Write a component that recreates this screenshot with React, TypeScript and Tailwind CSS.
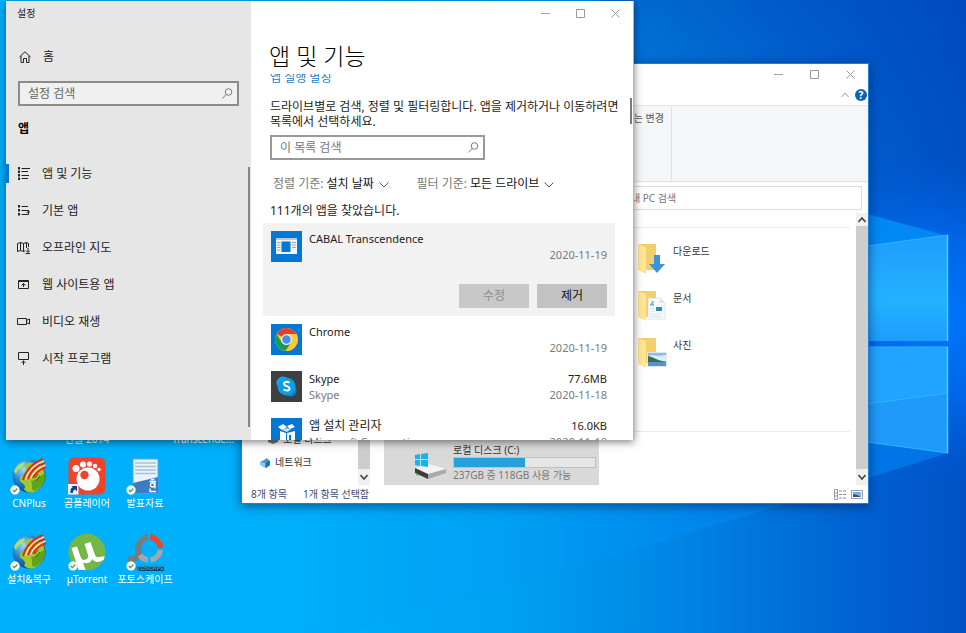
import type { ReactNode } from 'react';

const sans = "font-['Noto_Sans','Noto_Sans_CJK_KR',sans-serif]";

const menuItems = [
  { label: '앱 및 기능', icon: 'apps', active: true },
  { label: '기본 앱', icon: 'defaults' },
  { label: '오프라인 지도', icon: 'maps' },
  { label: '웹 사이트용 앱', icon: 'web' },
  { label: '비디오 재생', icon: 'video' },
  { label: '시작 프로그램', icon: 'startup' },
];

const shortcuts = [
  { lines: ['한컴오피스', '한글 2014'] },
  { lines: [] },
  { lines: ['CABAL', 'Transcende...'] },
  { lines: ['CNPlus'], icon: 'globe' },
  { lines: ['곰플레이어'], icon: 'gom' },
  { lines: ['발표자료'], icon: 'hwp' },
  { lines: [] },
  { lines: ['설치&복구'], icon: 'globe' },
  { lines: ['μTorrent'], icon: 'utorrent' },
  { lines: ['포토스케이프'], icon: 'photoscape' },
];

const folders = [
  { label: '다운로드', kind: 'download' },
  { label: '문서', kind: 'document' },
  { label: '사진', kind: 'picture' },
];

const Wallpaper = () => (
  <svg className="absolute inset-0 h-full w-full" viewBox="0 0 966 633" preserveAspectRatio="none" aria-hidden="true">
    <defs>
      <linearGradient id="sky" x1="0" y1="0" x2="1" y2="0">
        <stop offset="0" stopColor="#00b0fb" />
        <stop offset="0.3" stopColor="#00b0fa" />
        <stop offset="0.52" stopColor="#00a2f2" />
        <stop offset="0.67" stopColor="#008ae8" />
        <stop offset="0.79" stopColor="#0074dc" />
        <stop offset="0.9" stopColor="#0060d2" />
        <stop offset="1" stopColor="#0052c6" />
      </linearGradient>
      <linearGradient id="dusk" x1="0" y1="0" x2="0" y2="1">
        <stop offset="0" stopColor="#003fb4" stopOpacity="0.45" />
        <stop offset="1" stopColor="#003fb4" stopOpacity="0" />
      </linearGradient>
      <linearGradient id="beam" x1="0" y1="0" x2="1" y2="0">
        <stop offset="0" stopColor="#00a8ff" stopOpacity="0" />
        <stop offset="0.5" stopColor="#0098ff" stopOpacity="0.2" />
        <stop offset="1" stopColor="#0090ff" stopOpacity="0.5" />
      </linearGradient>
      <radialGradient id="glow" gradientUnits="userSpaceOnUse" cx="935" cy="320" r="160">
        <stop offset="0" stopColor="#0078ff" />
        <stop offset="0.5" stopColor="#006cf2" stopOpacity="0.75" />
        <stop offset="1" stopColor="#0060e0" stopOpacity="0" />
      </radialGradient>
      <linearGradient id="pane" x1="0" y1="0" x2="0" y2="1">
        <stop offset="0" stopColor="#1f9dfc" />
        <stop offset="0.6" stopColor="#22b2ff" />
        <stop offset="1" stopColor="#1e9dfc" />
      </linearGradient>
    </defs>
    <rect width="966" height="633" fill="url(#sky)" />
    <rect x="600" width="366" height="240" fill="url(#dusk)" />
    <rect x="770" y="150" width="196" height="340" fill="url(#glow)" />
    <path d="M860 212 948 236 860 248Z" fill="#0092fa" opacity="0.8" />
    <path d="M100 440H860L948 453 766 510 600 560 345 633H100Z" fill="url(#beam)" />
    <path d="M860 247 948 235V341H860Z" fill="url(#pane)" />
    <path d="M860 347H948V453L860 441Z" fill="#1f99fa" />
    <path d="M860 347H948V393L860 405Z" fill="#21a4ff" />
    <path d="M860 247 948 235M860 347H948M860 441 948 453M860 405 948 393" fill="none" stroke="#2cb6fd" />
    <path d="M947.500 235V341M947.500 347V453" stroke="#40d8ff" strokeWidth="1.500" />
  </svg>
);

const SyncBadge = () => (
  <g>
    <circle cx="5" cy="33" r="4.5" fill="#fff" stroke="#cfdcd0" strokeWidth=".5" />
    <path d="m2.8 33 1.6 1.7 3-3.2" fill="none" stroke="#3f9b45" strokeWidth="1.2" />
  </g>
);

const ShortcutIcon = ({ name }: { name?: string }) => {
  if (name === 'globe') {
    return (
      <svg width="38" height="38" viewBox="0 0 38 38" aria-hidden="true">
        <defs>
          <radialGradient id="earth" cx="0.35" cy="0.3" r="0.75">
            <stop offset="0" stopColor="#9adcf8" />
            <stop offset="0.5" stopColor="#2484cc" />
            <stop offset="1" stopColor="#0a3f80" />
          </radialGradient>
        </defs>
        <circle cx="19" cy="19" r="16.5" fill="url(#earth)" />
        <path d="M16 7c6-3 14 0 17 5 4 8 1 18-7 22-5 3-11 1-12-2 3-3-1-5-4-8-1-4 3-6 6-8 3-2-2-5 0-9Z" fill="#9dcb2c" />
        <path d="M21 24c5 0 9-5 14-8 1 9-4 16-12 18-2-3 0-6-2-10Z" fill="#5fa31c" />
        <path d="M4 14c2-5 6-8 11-9l-2 5-5 3-2 4Z" fill="#b6dc68" />
        <path d="M13 23C16 13 23 6 33 2M18 22C21 14 27 8 35 6M23 21c3-6 7-9 13-11" fill="none" stroke="#d9301f" strokeWidth="2.2" />
        <path d="M15.500 22.500C18 14 25 7 34 4M20.500 21.500c3-7 8-11 15-13.500" fill="none" stroke="#ffe39a" strokeWidth="1.5" />
        <path d="m25 21 3-4M26 24l4-5" stroke="#3d6b14" />
        <SyncBadge />
      </svg>
    );
  }
  if (name === 'gom') {
    return (
      <svg width="38" height="38" viewBox="0 0 38 38" aria-hidden="true">
        <rect x=".5" y=".5" width="37" height="37" rx="6" fill="#f0432c" />
        <circle cx="20" cy="22" r="11.5" fill="#fff" />
        <circle cx="16.500" cy="18" r="4.2" fill="#f0432c" />
        <circle cx="8" cy="11.500" r="3.5" fill="#fff" />
        <circle cx="15" cy="7.500" r="3" fill="#fff" />
        <circle cx="21.500" cy="7" r="2.600" fill="#fff" />
        <circle cx="27" cy="9" r="2.200" fill="#fff" />
        <circle cx="31" cy="12.500" r="1.800" fill="#fff" />
        <rect x="0" y="27" width="10.500" height="10.500" fill="#eef3fa" />
        <path d="M2.500 36c0-4 .5-5.500 2.500-5.500L3.500 29H9v5.500L7.300 32.500C5.500 33 5 34 4.800 36Z" fill="#173e84" />
      </svg>
    );
  }
  if (name === 'hwp') {
    return (
      <svg width="38" height="38" viewBox="0 0 38 38" aria-hidden="true">
        <rect x="7" y="2" width="25" height="34" fill="#e9f3fb" stroke="#5aa5dc" />
        <path d="M9 6h21M9 9.500h21M9 13h21M9 16.500h21" stroke="#a3c2dc" strokeWidth="1.500" />
        <path d="M7 26 32 20V36H7Z" fill="#3b7dc0" />
        <path d="M25 22.500h3.500M23.500 24.500h6.500M24 31.500v3h6M29 24.500v7" fill="none" stroke="#fff" strokeWidth="1.300" />
        <circle cx="26.500" cy="28" r="2" fill="none" stroke="#fff" strokeWidth="1.300" />
        <SyncBadge />
      </svg>
    );
  }
  if (name === 'utorrent') {
    return (
      <svg width="38" height="38" viewBox="0 0 38 38" aria-hidden="true">
        <circle cx="19" cy="19" r="18.500" fill="#74b748" />
        <path d="M3.500 15 9 13.500 13 25c1.500 3.500 8 2 7-3L16.500 11l6-2L27 22c1 3 4.500 2.500 9.500 1l-.5 3.500c-4 3-9.500 3.500-11.500-.5-2 4-6 5-9.500 3.500L17.500 37h-7Z" fill="#fff" />
        <SyncBadge />
      </svg>
    );
  }
  if (name === 'photoscape') {
    return (
      <svg width="38" height="38" viewBox="0 0 38 38" aria-hidden="true">
        <path d="M22 4A12 12 0 0 0 12.500 18C13 24 9 27 2 26" fill="none" stroke="#737d84" strokeWidth="6" />
        <path d="M24 4a12 12 0 0 1 10.500 11" fill="none" stroke="#f3461f" strokeWidth="5.500" />
        <path d="M34.500 17A12 12 0 0 1 24.500 27M22 27a11 11 0 0 1-8-5" fill="none" stroke="#a0a8ae" strokeWidth="5.500" />
        <text x="11" y="37" fontSize="6" fontWeight="700" fill="#5c93b4">TOSCAPE</text>
        <SyncBadge />
      </svg>
    );
  }
  return <span className="h-[38px]" />;
};

const Caption = ({ className }: { className: string }) => (
  <div className="flex justify-end">
    <button type="button" aria-label="최소화" className={className}>
      <svg width="9" height="9" viewBox="0 0 9 9" stroke="#a3a3a3"><path d="M0 4.500h9" /></svg>
    </button>
    <button type="button" aria-label="최대화" className={className}>
      <svg width="9" height="9" viewBox="0 0 9 9" fill="none" stroke="#999"><path d="M.5.5h8v8h-8z" /></svg>
    </button>
    <button type="button" aria-label="닫기" className={className}>
      <svg width="9" height="9" viewBox="0 0 9 9" stroke="#999"><path d="m.5.5 8 8M8.500.5l-8 8" /></svg>
    </button>
  </div>
);

const Chevron = ({ up = false, bold = false }: { up?: boolean; bold?: boolean }) => (
  <svg width="8" height="6" viewBox="0 0 8 6" fill="none" stroke={bold ? '#444' : '#999'} strokeWidth={bold ? 1.6 : 1} aria-hidden="true">
    <path d={up ? 'M.5 5 4 1l3.500 4' : 'M.5 1 4 5l3.500-4'} />
  </svg>
);

const FolderIcon = ({ kind }: { kind: string }) => (
  <svg width="30" height="33" viewBox="0 0 30 33" aria-hidden="true">
    <path d="M1 2h18v26H8L1 27Z" fill="#f3cf6b" />
    <path d="M1 2 9 5V32L1 28Z" fill="#ffe596" />
    {kind === 'download' && <path d="M17 13h6v9h5L20 31l-8-9h5Z" fill="#3a94dd" />}
    {kind === 'document' && (
      <g>
        <path d="M11 9h12l5 5v16H11Z" fill="#f7fafc" stroke="#cfd8de" strokeWidth=".7" />
        <path d="M23 9v5h5" fill="#dbe5ec" />
        <path d="m13 17 3-5v5M13.500 15.500h3" fill="none" stroke="#5ba6d2" />
        <rect x="19" y="18" width="6" height="4" fill="#3c88a8" />
        <path d="M13 19.500h5M13 22h5M13 25h12M13 27.500h12" stroke="#d5dfe5" strokeWidth=".8" />
      </g>
    )}
    {kind === 'picture' && (
      <g>
        <rect x="10.500" y="16.500" width="19" height="14" fill="#8cbcec" stroke="#dfe7ec" />
        <path d="M11 20c5-2 8 1 18-1v6H11Z" fill="#d8ecf9" />
        <path d="M11 20c5 1 9 4 14 5l4 1H11Z" fill="#3d6a58" />
        <path d="M11 26h18v4H11Z" fill="#5b94c0" />
      </g>
    )}
  </svg>
);

const Explorer = () => (
  <section className="absolute left-[241px] top-[63px] flex h-[441px] w-[628px] flex-col border border-[#1683d8] bg-white text-[10px] text-[#333] shadow-[0_2px_10px_rgba(0,20,60,0.55)]">
    <Caption className="flex h-[21px] w-9 items-center justify-center" />
    <div className="flex h-[21px] items-center justify-end gap-[6px] border-b border-[#e3e4e6] pr-px">
      <button type="button" aria-label="리본 최소화"><Chevron up /></button>
      <button type="button" aria-label="도움말" className="flex size-3 items-center justify-center rounded-full bg-[#0f62b4] text-[10px] font-bold text-white">?</button>
    </div>
    <div className="flex h-[76px] border-b border-[#dedfe0] bg-[#f5f6f7]">
      <div className="my-px flex w-[430px] justify-end border-r border-[#dedfe0] pr-[7px] pt-1">
        <span className="text-[#555]">또는 변경</span>
      </div>
    </div>
    <div className="flex h-[31px] items-center justify-end pr-[6px]">
      <input
        type="search"
        aria-label="내 PC 검색"
        placeholder="내 PC 검색"
        className="h-6 w-[240px] border border-[#dcdcdc] bg-white pl-2 text-[10px] outline-none placeholder:text-[#777]"
      />
    </div>
    <div className="flex min-h-0 flex-1">
      <nav className="flex w-[116px] flex-col justify-end gap-2 pb-[15px] pl-[17px]">
        <a href="#disk" className="flex items-center gap-1 pl-2">
          <svg width="12" height="10" viewBox="0 0 12 10"><path d="m1 5 5-3 5 2v3L6 9 1 7Z" fill="#777" /></svg>
          로컬 디스크
        </a>
        <a href="#network" className="flex items-center gap-1">
          <svg width="12" height="12" viewBox="0 0 12 12" aria-hidden="true">
            <path d="M1 5 5 3 8 1l3 3v4l-4 3-4-2Z" fill="#3f9ace" />
            <path d="M1 5 6 6v4L1 8Z" fill="#8bc9eb" />
            <path d="m7 5 4-1v4L7 11Z" fill="#226fa5" />
          </svg>
          네트워크
        </a>
      </nav>
      <div className="flex w-3 flex-col bg-[#cdcdcd]">
        <div className="mt-auto flex h-4 items-center justify-center bg-[#f0f0f0]"><Chevron bold /></div>
      </div>
      <div className="flex min-w-0 flex-1 flex-col pl-[14px]">
        <div className="mr-[6px] h-[15px] border-b border-[#ebebeb]" />
        <ul className="ml-auto flex w-[219px] flex-col gap-[14px] pt-[14px]">
          {folders.map(({ label, kind }) => (
            <li key={kind} className="flex gap-[6px]">
              <FolderIcon kind={kind} />
              <span className="pt-[2px]">{label}</span>
            </li>
          ))}
        </ul>
        <div className="mr-[6px] mt-auto border-b border-[#ebebeb]" />
        <div className="mt-[5px] flex h-[48px] w-[215px] gap-[6px] bg-[#d9d9d9] pl-[30px] pt-[7px]">
          <svg className="mt-2" width="33" height="28" viewBox="0 0 33 28" aria-hidden="true">
            <path d="m1 16 14-4 17 5-18 6Z" fill="#f3f3f3" />
            <path d="M1 16 14 22v5L1 21Z" fill="#3d3d3d" />
            <path d="m14 22 18-5v4L14 27Z" fill="#aaa" />
            <path d="m2 21 2 1v2l-2-1Z" fill="#46d24c" />
            <path d="m1 3 5-1v5H1ZM7 2l7-1v6H7ZM1 8h5v6l-5-1ZM7 8h7v7l-7-1Z" fill="#13b4f0" />
          </svg>
          <div className="w-[143px] leading-[13px]">
            <div>로컬 디스크 (C:)</div>
            <div role="progressbar" aria-label="디스크 사용량" aria-valuenow={50} className="h-[11px] border border-[#c0c0c0] bg-[#e6e6e6]">
              <div className="h-full w-1/2 bg-[#26a0da]" />
            </div>
            <div className="whitespace-nowrap pt-px text-[#777]">237GB 중 118GB 사용 가능</div>
          </div>
        </div>
      </div>
      <div className="flex w-3 flex-col bg-[#cdcdcd]">
        <div className="flex h-[13px] items-center justify-center bg-[#f0f0f0]"><Chevron up bold /></div>
        <div className="mt-auto flex h-4 items-center justify-center bg-[#f0f0f0]"><Chevron bold /></div>
      </div>
    </div>
    <footer className="flex h-[18px] items-center gap-4 pl-[9px] pr-[5px] text-[#3b4d70]">
      <span>8개 항목</span>
      <span>1개 항목 선택함</span>
      <div className="ml-auto flex gap-[5px]">
        <svg width="12" height="11" viewBox="0 0 12 11" aria-hidden="true">
          <path d="M.5.5h3v10h-3zM.5 4h3M.5 7h3" fill="none" stroke="#999" />
          <path d="M5 2h7M5 5.500h7M5 9h7" stroke="#888" strokeDasharray="3 1" />
        </svg>
        <svg width="12" height="11" viewBox="0 0 12 11" aria-hidden="true">
          <rect x=".5" y="1.500" width="11" height="8" fill="#fff" stroke="#9aa5ad" />
          <path d="M2 3h8v5H2Z" fill="#7cb3e0" />
          <path d="m2 5 4 1 4 2H2Z" fill="#2e5564" />
        </svg>
      </div>
    </footer>
  </section>
);

const menuPaths: Record<string, ReactNode> = {
  apps: (
    <>
      <path d="M4.500 1.500H13M4.500 4.500H11M4.500 8.500H12M4.500 11.500H11" />
      <path d="M2 0v13" strokeWidth="2" strokeDasharray="2.500 1" />
    </>
  ),
  defaults: (
    <>
      <path d="M4.500 2.500H11M4.500 6.500H12M4.500 10.500H11.500V8M9.500 9l2-2 2 2" />
      <path d="M2 1v11" strokeWidth="2" strokeDasharray="2.500 1.500" />
    </>
  ),
  maps: <path d="M.5 2.500 3.500 1.500 6.500 2.500 9.500 1.500 11.500 2.500V6M.5 2.500V10.500L3.500 9.500 6.500 10.500 8 10M3.500 1.500v8M6.500 2.500v8M9.500 1.500V7M11 7v4M9 9.500l2 2 2-2M8.500 12.500H13" />,
  web: <path d="M4 10.500H1.500V2.500H11.500V10.500H4M1.500 3.500h10M6.500 9V5.500M4.500 7.500l2-2 2 2" />,
  video: <path d="M.5 3.500H9.500V9.500H.5ZM9.500 5.500 12.500 4V9L9.500 7.500" />,
  startup: <path d="M1.500.5H11.500V7.500H1.500ZM6.500 13V8.500M4.500 11l2-2 2 2" />,
};

const SearchIcon = () => (
  <svg width="11" height="11" viewBox="0 0 11 11" fill="none" stroke="#777" aria-hidden="true">
    <circle cx="6.500" cy="4" r="3.300" />
    <path d="M4 6.500.5 10.500" />
  </svg>
);

const SortSelect = ({ id, label, value }: { id: string; label: string; value: string }) => (
  <div className="flex items-center gap-[3px]">
    <label htmlFor={id} className="text-[#777]">{label}</label>
    <div className="relative">
      <select id={id} className="block appearance-none bg-transparent pr-[14px] text-xs text-[#111] outline-none">
        <option>{value}</option>
      </select>
      <svg className="pointer-events-none absolute right-0 top-[6px]" width="10" height="6" viewBox="0 0 10 6" fill="none" stroke="#555" aria-hidden="true">
        <path d="m.5.5 4.500 4.500L9.500.5" />
      </svg>
    </div>
  </div>
);

type AppRowProps = {
  icon: ReactNode;
  name: string;
  nameClass?: string;
  size?: string;
  publisher?: string;
  date: string;
  children?: ReactNode;
};

const AppRow = ({ icon, name, nameClass = '', size, publisher, date, children }: AppRowProps) => (
  <li className={`px-2 py-2 ${children ? 'bg-[#f2f2f2]' : ''}`}>
    <div className="flex h-[31px] gap-[7px] text-[11px] leading-[15px]">
      {icon}
      <div className="flex-1 text-[#222]">
        <div className={`h-4 leading-4 ${nameClass}`}>{name}</div>
        <div className="h-[15px] text-[#7a7a7a]">{publisher}</div>
      </div>
      <div className="text-right text-[#222]">
        <div className="h-4 leading-4">{size}</div>
        <div className="h-[15px] text-[#7a7a7a]">{date}</div>
      </div>
    </div>
    {children}
  </li>
);

const cabalIcon = (
  <svg width="31" height="31" viewBox="0 0 31 31" aria-hidden="true">
    <path d="M0 0h31v31H0Z" fill="#0277d4" />
    <path d="M5 7h21v16H5Z" fill="#f4f4f4" />
    <path d="M5 7h21v2H5Z" fill="#b9c9d4" />
    <path d="M10.500 10.500h9v10.500h-9Z" fill="#0277d4" />
    <path d="M6 11.500h3.500M6 14h3.500M6 16.500h3.500M6 19h3.500M21 11.500h4M21 14h4M21 16.500h4" stroke="#9aa8b1" />
  </svg>
);

const chromeIcon = (
  <svg width="31" height="31" viewBox="0 0 31 31" aria-hidden="true">
    <path d="M0 0h31v31H0Z" fill="#0277d4" />
    <circle cx="15.500" cy="15.500" r="11.500" fill="#fbc934" />
    <path d="M15.500 15.500 5.500 9.800A11.500 11.500 0 0 1 25.500 10H15.500Z" fill="#dc4337" />
    <path d="M5.500 9.800A11.500 11.500 0 0 0 14.500 27L20.300 18.200 10.700 18.300Z" fill="#189b5a" />
    <circle cx="15.500" cy="15.500" r="5.500" fill="#f3f3f3" />
    <circle cx="15.500" cy="15.500" r="4.300" fill="#4b8bf0" />
  </svg>
);

const skypeIcon = (
  <svg width="31" height="31" viewBox="0 0 31 31" aria-hidden="true">
    <path d="M0 0h31v31H0Z" fill="#3f3f41" />
    <circle cx="12" cy="12" r="6.500" fill="#18a8e8" />
    <circle cx="19.500" cy="19.500" r="6" fill="#0d80d8" />
    <circle cx="15.500" cy="15.500" r="9" fill="#0d9de6" />
    <path d="M18.500 11.800c-2-1.500-5.500-1.200-5.500 1 0 2.800 5.500 1.900 5.500 4.600 0 2.600-4 2.500-6 1.100" fill="none" stroke="#fff" strokeWidth="2" />
  </svg>
);

const installerIcon = (
  <svg width="31" height="31" viewBox="0 0 31 31" aria-hidden="true">
    <path d="M0 0h31v31H0Z" fill="#0277d4" />
    <path d="m7 9 5-3 4 3-5 3ZM16 8l5-2 3 3-5 2Z" fill="#fff" />
    <path d="m9 13 6 2V27L9 24ZM16 15l8-2v11l-8 3Z" fill="#fff" />
    <path d="m11 12 5-2 4 1-4 3Z" fill="#cfe4f6" />
    <path d="M18 17h2v6h-2Z" fill="#0277d4" />
  </svg>
);

const Settings = () => (
  <section className="absolute left-[6px] top-px flex h-[439px] w-[628px] overflow-hidden border-r border-[#b5b5b5] bg-white text-xs text-[#222] shadow-[0_2px_8px_rgba(0,0,0,0.5)]">
    <aside className="flex w-[245px] flex-col bg-[#e6e6e6]">
      <div className="h-[38px] pl-[11px] pt-[6px] text-[10px]">설정</div>
      <a href="#home" className="flex h-9 items-center gap-3 pl-[13px]">
        <svg width="12" height="12" viewBox="0 0 12 12" fill="none" stroke="#222" aria-hidden="true">
          <path d="M.5 6 6 .8 11.500 6M2 5v6.500h2.500V7.500h3v4H10V5" />
        </svg>
        홈
      </a>
      <label className="mx-3 mt-[6px] flex h-[25px] items-center border-2 border-[#8b8b8b] bg-[#f0f0f0] pl-2 pr-1">
        <input type="search" aria-label="설정 검색" placeholder="설정 검색" className="min-w-0 flex-1 bg-transparent text-xs outline-none placeholder:text-[#666]" />
        <SearchIcon />
      </label>
      <h2 className="mt-[15px] h-[46px] pl-3 font-bold text-black">앱</h2>
      <nav className="mr-px flex h-[260px]">
        <div className="flex-1">
          {menuItems.map(({ label, icon, active }) => (
            <a key={icon} href={`#${icon}`} className="flex h-[37px]">
              <span className={`-mt-[3px] h-[19px] w-[3px] ${active ? 'bg-[#0078d7]' : ''}`} />
              <svg className="ml-2 mr-3" width="13" height="13" viewBox="0 0 13 13" fill="none" stroke="#222" aria-hidden="true">
                {menuPaths[icon]}
              </svg>
              <span className="leading-[13px]">{label}</span>
            </a>
          ))}
        </div>
        <div className="w-[2px] bg-[#858585]" />
      </nav>
    </aside>
    <main className="flex min-w-0 flex-1 flex-col">
      <Caption className="flex h-[25px] w-[35px] items-center justify-center" />
      <h1 className="h-[48px] pl-[18px] pt-3 text-[23px] font-light leading-[36px] text-black">앱 및 기능</h1>
      <div className="flex min-h-0 flex-1">
        <div className="min-w-0 flex-1 overflow-hidden pl-3">
          <div className="pl-[7px]">
            <a href="#aliases" className="-mt-1 block h-[15px] leading-[15px] text-[#1a7fc4]">앱 실행 별칭</a>
            <p className="mt-[14px] whitespace-nowrap leading-[15px]">
              드라이브별로 검색, 정렬 및 필터링합니다. 앱을 제거하거나 이동하려면
              <br />
              목록에서 선택하세요.
            </p>
            <label className="mt-[6px] flex h-[25px] w-[215px] items-center border-2 border-[#999] pl-2 pr-1">
              <input type="search" aria-label="이 목록 검색" placeholder="이 목록 검색" className="min-w-0 flex-1 bg-transparent text-xs outline-none placeholder:text-[#777]" />
              <SearchIcon />
            </label>
            <div className="mt-[15px] flex h-[18px] items-center gap-7 pl-[3px]">
              <SortSelect id="sort" label="정렬 기준:" value="설치 날짜" />
              <SortSelect id="filter" label="필터 기준:" value="모든 드라이브" />
            </div>
            <p className="mt-[9px] h-[21px] leading-[17px]">111개의 앱을 찾았습니다.</p>
          </div>
          <ul className="mr-[15px]">
            <AppRow icon={cabalIcon} name="CABAL Transcendence" date="2020-11-19">
              <div className="flex justify-end gap-2 pt-[22px]">
                <button type="button" disabled className="h-6 w-[70px] bg-[#c8c8c8] text-[#8d8d8d]">수정</button>
                <button type="button" className="h-6 w-[70px] bg-[#c2c2c2] text-[#111]">제거</button>
              </div>
            </AppRow>
            <AppRow icon={chromeIcon} name="Chrome" date="2020-11-19" />
            <AppRow icon={skypeIcon} name="Skype" publisher="Skype" size="77.6MB" date="2020-11-18" />
            <AppRow icon={installerIcon} name="앱 설치 관리자" nameClass="text-xs" publisher="Microsoft Corporation" size="16.0KB" date="2020-11-18" />
          </ul>
        </div>
        <div className="mr-px mt-6 h-[26px] w-[2px] bg-[#7a7a7a]" />
      </div>
    </main>
  </section>
);

export default function App() {
  return (
    <div className={`relative h-screen overflow-hidden ${sans}`}>
      <Wallpaper />
      <div className="relative grid w-[232px] grid-cols-4 pt-[381px] text-[10px] text-white">
        {shortcuts.map(({ lines, icon }, i) => (
          <div
            key={i}
            className={`flex h-[76px] flex-col items-center whitespace-nowrap leading-[12px] [text-shadow:0_1px_2px_#000,1px_1px_2px_#000] ${i === 0 ? 'col-start-2' : ''}`}
          >
            <ShortcutIcon name={icon} />
            {lines.length > 0 && (
              <button type="button" className="mt-[2px]">
                {lines.map((line) => (
                  <span key={line} className="block">{line}</span>
                ))}
              </button>
            )}
          </div>
        ))}
      </div>
      <Explorer />
      <Settings />
    </div>
  );
}
